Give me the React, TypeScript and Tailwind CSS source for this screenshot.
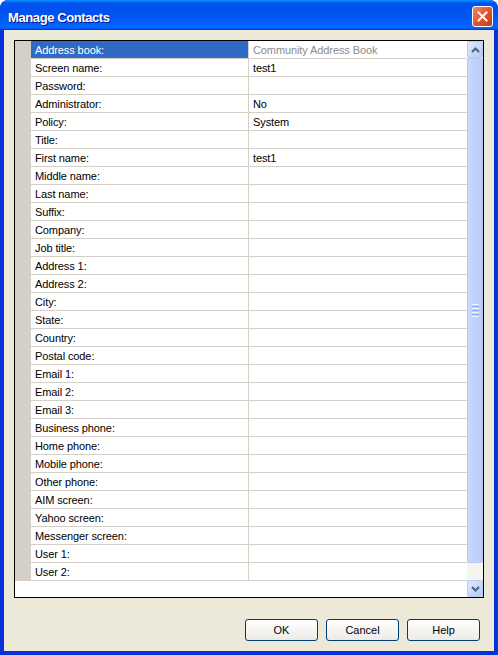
import React from "react";

const rows: [string, string][] = [
  ["Address book:", "Community Address Book"],
  ["Screen name:", "test1"],
  ["Password:", ""],
  ["Administrator:", "No"],
  ["Policy:", "System"],
  ["Title:", ""],
  ["First name:", "test1"],
  ["Middle name:", ""],
  ["Last name:", ""],
  ["Suffix:", ""],
  ["Company:", ""],
  ["Job title:", ""],
  ["Address 1:", ""],
  ["Address 2:", ""],
  ["City:", ""],
  ["State:", ""],
  ["Country:", ""],
  ["Postal code:", ""],
  ["Email 1:", ""],
  ["Email 2:", ""],
  ["Email 3:", ""],
  ["Business phone:", ""],
  ["Home phone:", ""],
  ["Mobile phone:", ""],
  ["Other phone:", ""],
  ["AIM screen:", ""],
  ["Yahoo screen:", ""],
  ["Messenger screen:", ""],
  ["User 1:", ""],
  ["User 2:", ""],
];

function ScrollButton({ up }: { up: boolean }) {
  return (
    <div className="h-[17px] w-full rounded-[2px] border border-[#B6CAF5] bg-gradient-to-br from-[#E1EAFE] to-[#B4C9F6] flex items-center justify-center">
      <svg width="9" height="6" viewBox="0 0 9 6">
        <path
          d={up ? "M1 5 L4.5 1.5 L8 5" : "M1 1 L4.5 4.5 L8 1"}
          stroke="#4D6185"
          strokeWidth="2"
          fill="none"
        />
      </svg>
    </div>
  );
}

function XPButton({ label }: { label: string }) {
  return (
    <div className="w-[73px] h-[22px] rounded-[3px] border border-[#003C74] bg-gradient-to-b from-[#FFFFFF] to-[#ECEBE6] flex items-center justify-center text-[11px] text-black">
      {label}
    </div>
  );
}

export default function App() {
  return (
    <div
      className="w-[498px] h-[655px] bg-[#0831D9] rounded-t-[8px] flex flex-col overflow-hidden"
      style={{ fontFamily: '"Liberation Sans", Arial, sans-serif' }}
    >
      {/* Title bar */}
      <div
        className="h-[30px] shrink-0 flex items-center justify-between pl-[8px] pr-[5px] rounded-t-[8px]"
        style={{
          background:
            "linear-gradient(to bottom, #0997FF 0%, #0053EE 10%, #0050EE 40%, #0066FF 86%, #0066FF 92%, #005BFF 95%, #003DD7 97%, #003DD7 100%)",
        }}
      >
        <span
          className="text-white font-bold text-[13px] tracking-[-0.4px] mt-[5px]"
          style={{ textShadow: "1px 1px #0F1089" }}
        >
          Manage Contacts
        </span>
        <div className="w-[21px] h-[21px] mt-[2px] rounded-[3px] border border-white bg-gradient-to-br from-[#E9876C] via-[#E0552F] to-[#C4391A] flex items-center justify-center">
          <svg width="11" height="11" viewBox="0 0 11 11">
            <path d="M1.5 1.5 L9.5 9.5 M9.5 1.5 L1.5 9.5" stroke="white" strokeWidth="2" strokeLinecap="square" />
          </svg>
        </div>
      </div>

      {/* Client area */}
      <div className="flex-1 mx-[4px] mb-[4px] bg-[#ECE9D8] flex flex-col pt-[10px] px-[10px]">
        <div className="h-[558px] border border-black bg-white flex">
          <div className="flex-1 flex flex-col">
            {rows.map(([label, value], i) => (
              <div key={label} className="h-[18px] flex border-b border-[#D4D0C8] text-[11px] leading-[19px] tracking-[-0.1px]">
                <div className="w-[16px] bg-[#D4D0C8] shrink-0" />
                <div
                  className={
                    i === 0
                      ? "w-[218px] shrink-0 pl-[4px] bg-[#316AC5] text-white border-r border-[#D4D0C8]"
                      : "w-[218px] shrink-0 pl-[4px] text-black border-r border-[#D4D0C8]"
                  }
                >
                  {label}
                </div>
                <div className={i === 0 ? "flex-1 pl-[4px] text-[#8C8C8C]" : "flex-1 pl-[4px] text-black"}>
                  {value}
                </div>
              </div>
            ))}
          </div>
          {/* Scrollbar */}
          <div className="w-[16px] shrink-0 bg-[#F5F4EE] flex flex-col">
            <ScrollButton up />
            <div className="h-[505px] w-full rounded-[2px] border border-[#B6CAF5] bg-gradient-to-r from-[#C9D8FC] to-[#B8CCF8] flex flex-col items-center justify-center gap-[1px]">
              <div className="w-[7px] h-[1px] bg-[#EEF4FE]" />
              <div className="w-[7px] h-[1px] bg-[#8CB0F8]" />
              <div className="w-[7px] h-[1px] bg-[#EEF4FE]" />
              <div className="w-[7px] h-[1px] bg-[#8CB0F8]" />
              <div className="w-[7px] h-[1px] bg-[#EEF4FE]" />
              <div className="w-[7px] h-[1px] bg-[#8CB0F8]" />
              <div className="w-[7px] h-[1px] bg-[#EEF4FE]" />
            </div>
            <div className="flex-1" />
            <ScrollButton up={false} />
          </div>
        </div>
        <div className="mt-[21px] flex justify-end gap-[8px] pr-[4px]">
          <XPButton label="OK" />
          <XPButton label="Cancel" />
          <XPButton label="Help" />
        </div>
      </div>
    </div>
  );
}
